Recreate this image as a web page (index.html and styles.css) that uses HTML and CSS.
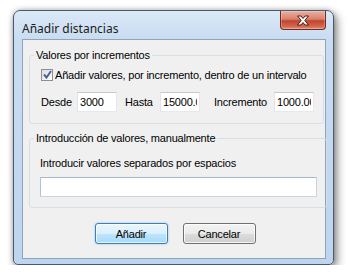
FILE: index.html
```html
<!DOCTYPE html>
<html>
<head>
    <title>Añadir distancias</title>
    <link rel="stylesheet" href="styles.css">
</head>
<body>
    <div class="window">
        <div class="titlebar">
            <span class="title">Añadir distancias</span>
            <button class="close" aria-label="Cerrar">
                <svg width="14" height="11" viewBox="0 0 14 11">
                    <path d="M1.5 1 H5 L7 3.5 L9 1 H12.5 L8.8 5.5 L12.5 10 H9 L7 7.5 L5 10 H1.5 L5.2 5.5 Z" fill="#fff" stroke="#4a1f17" stroke-width="1" stroke-linejoin="round"></path>
                </svg>
            </button>
        </div>

        <div class="client">
            <fieldset class="group group-inc">
                <legend>Valores por incrementos</legend>
                <label class="check">
                    <span class="box">
                        <svg width="9" height="9" viewBox="0 0 9 9">
                            <path d="M1 4.5 L3.5 7.5 L8 1" fill="none" stroke="#4b60a0" stroke-width="2"></path>
                        </svg>
                    </span>
                    Añadir valores, por incremento, dentro de un intervalo
                </label>
                <div class="range">
                    <span class="lbl lbl-desde">Desde</span>
                    <input class="field num" type="text" value="3000">
                    <span class="lbl lbl-hasta">Hasta</span>
                    <input class="field num" type="text" value="15000.00">
                    <span class="lbl lbl-inc">Incremento</span>
                    <input class="field num" type="text" value="1000.00">
                </div>
            </fieldset>

            <fieldset class="group group-man">
                <legend>Introducción de valores, manualmente</legend>
                <div class="hint">Introducir valores separados por espacios</div>
                <input class="field wide" type="text" value="">
            </fieldset>

            <div class="actions">
                <button class="btn btn-default">Añadir</button>
                <button class="btn">Cancelar</button>
            </div>
        </div>
    </div>
</body>
</html>
```

FILE: styles.css
```css
body {
    margin: 0;
    background-color: #ffffff;
    font-family: 'Liberation Sans', Arial, sans-serif;
    font-size: 11px;
    letter-spacing: -0.2px;
    color: #000000;
}

.window {
    box-sizing: border-box;
    width: 321px;
    height: 255px;
    margin: 10px 0 0 13px;
    padding: 0 7px 6px 8px;
    border: 1px solid #4a5a6c;
    border-radius: 7px 7px 5px 5px;
    background: linear-gradient(to bottom, #dbe9f7 0px, #c9dcf1 28px, #bed5ef 100%);
    box-shadow: 3px 4px 10px rgba(0, 0, 0, 0.45), 0 0 5px rgba(0, 0, 0, 0.25);
}

.titlebar {
    display: flex;
    align-items: flex-start;
    justify-content: space-between;
    height: 28px;
}

.title {
    font-family: 'Noto Sans', sans-serif;
    font-size: 12px;
    letter-spacing: 0;
    color: #1b1b1b;
    margin-top: 9px;
}

.close {
    width: 46px;
    height: 19px;
    margin: 0;
    padding: 0;
    border: 1px solid #6b2b20;
    border-top: none;
    border-radius: 0 0 4px 4px;
    background: linear-gradient(to bottom, #eab0a2 0%, #d9816c 45%, #c4432c 55%, #d2664c 85%, #e3907a 100%);
    box-shadow: inset 0 0 0 1px rgba(255, 255, 255, 0.25);
    display: flex;
    align-items: center;
    justify-content: center;
}

.client {
    box-sizing: border-box;
    height: 220px;
    padding: 0 5px 0 6px;
    border: 1px solid #8ea4bd;
    background-color: #f0f0f0;
}

.group {
    margin: 0;
    padding: 0 9px 0 11px;
    border: 1px solid #d5dfe5;
    border-radius: 3px;
}

.group legend {
    padding: 0 2px;
    margin-left: -7px;
    line-height: 13px;
}

.group-inc {
    margin-top: 9px;
    padding-bottom: 11px;
}

.group-man {
    margin-top: 8px;
    padding-bottom: 10px;
}

.check {
    display: flex;
    align-items: center;
    height: 13px;
    margin-top: 6px;
    white-space: nowrap;
}

.box {
    box-sizing: border-box;
    width: 12px;
    height: 12px;
    margin: 0 2px 0 0;
    border: 1px solid #8f8f8f;
    background: linear-gradient(to bottom right, #dcdcdc, #ffffff);
    display: flex;
    align-items: center;
    justify-content: center;
}

.range {
    display: flex;
    align-items: center;
    margin-top: 11px;
}

.lbl {
    white-space: nowrap;
}

.lbl-desde {
    width: 36px;
}

.lbl-hasta {
    width: 35px;
    margin-left: 8px;
}

.lbl-inc {
    width: 60px;
    margin-left: 14px;
}

.field {
    box-sizing: border-box;
    height: 20px;
    margin: 0;
    padding: 0 2px;
    border: 1px solid;
    border-color: #c5c9cf #e3e9ef #e3e9ef #e2e3ea;
    background-color: #ffffff;
    font-family: 'Liberation Sans', Arial, sans-serif;
    font-size: 11px;
    letter-spacing: -0.2px;
    color: #000000;
    outline: none;
}

.num {
    width: 40px;
}

.hint {
    margin-top: 12px;
    margin-left: -1px;
    line-height: 13px;
}

.wide {
    display: block;
    width: 277px;
    margin: 7px 0 0 -1px;
    border-color: #a8b8c8 #c9d6e2 #c9d6e2 #b3c3d3;
}

.actions {
    display: flex;
    justify-content: center;
    gap: 15px;
    margin-top: 15px;
    padding-left: 1px;
}

.btn {
    box-sizing: border-box;
    width: 73px;
    height: 21px;
    padding: 0;
    border: 1px solid #707070;
    border-radius: 3px;
    background: linear-gradient(to bottom, #f2f2f2 0%, #ebebeb 50%, #dddddd 51%, #cfcfcf 100%);
    box-shadow: inset 0 0 0 1px rgba(255, 255, 255, 0.8);
    font-family: 'Liberation Sans', Arial, sans-serif;
    font-size: 11px;
    letter-spacing: -0.2px;
    color: #000000;
}

.btn-default {
    border-color: #3c7fb1;
    background: linear-gradient(to bottom, #eaf6fd 0%, #d9f0fc 50%, #bee6fd 51%, #a7d9f5 100%);
    box-shadow: inset 0 0 0 1px rgba(255, 255, 255, 0.7), 0 0 2px rgba(60, 150, 220, 0.6);
}
```
